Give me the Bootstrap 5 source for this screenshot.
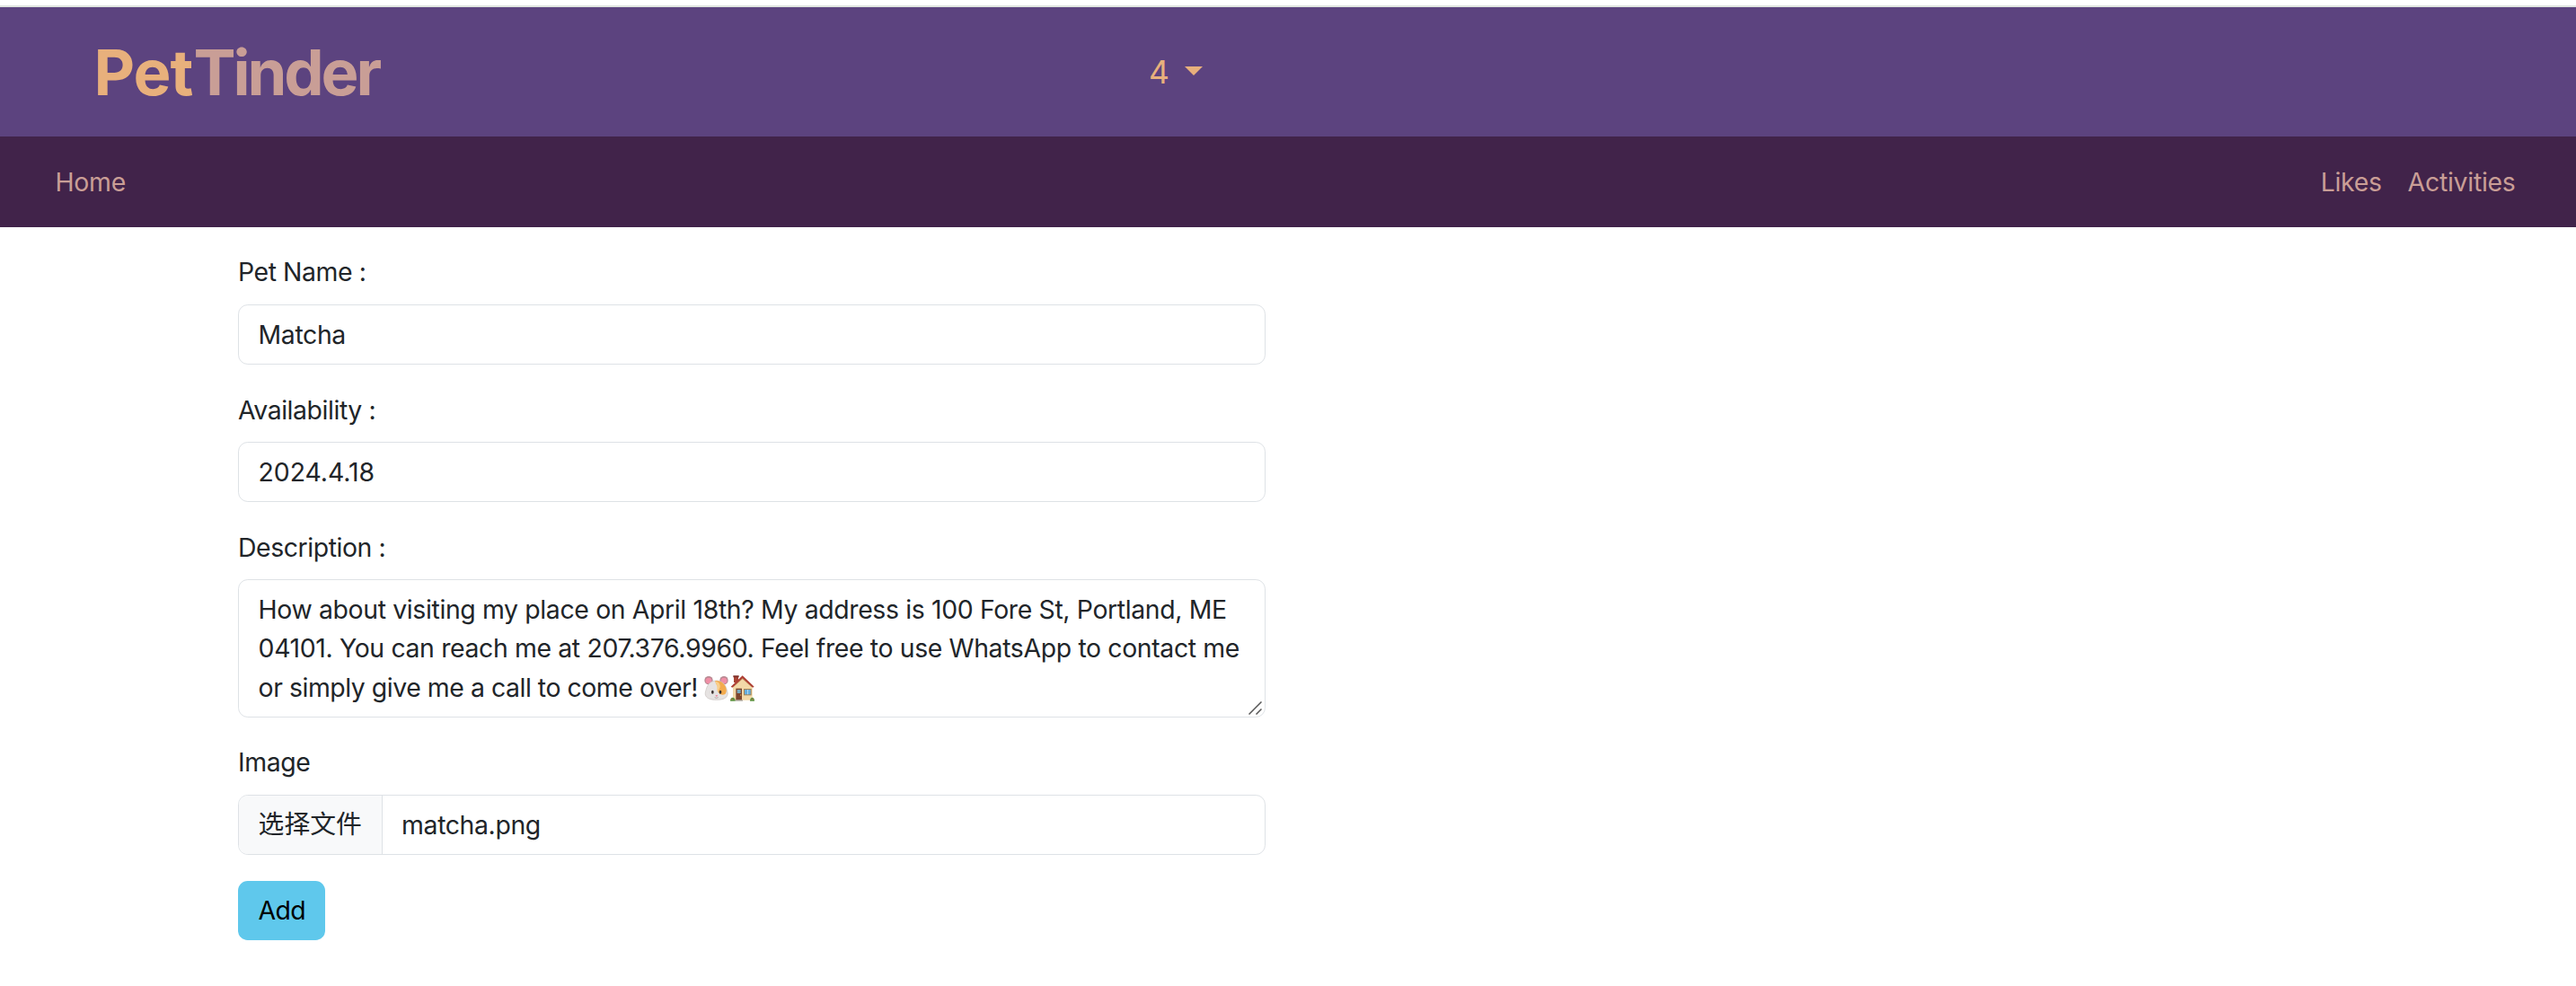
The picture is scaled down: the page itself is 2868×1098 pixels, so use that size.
<!DOCTYPE html>
<html lang="en">
<head>
<meta charset="utf-8">
<meta name="viewport" content="width=device-width, initial-scale=1">
<title>PetTinder</title>
<link href="https://cdn.jsdelivr.net/npm/bootstrap@5.3.0/dist/css/bootstrap.min.css" rel="stylesheet">
<script src="https://cdn.jsdelivr.net/npm/bootstrap@5.3.0/dist/js/bootstrap.bundle.min.js"></script>
<style>
html{font-size:28.8px}
body{font-family:Inter,"Noto Sans CJK SC",sans-serif;color:#212529;background:#fff;line-height:43.2px;font-size:28.4px}
.topline{height:8px;border-bottom:2px solid #dfe4df}
.brandbar{height:144px;background:#5c437f;padding-left:104.5px}
.brandname{width:1174.5px;padding-top:38px;font-size:70.5px;font-weight:700;color:#c99e96;line-height:1;letter-spacing:-3.1px}
.pet-part{color:#e8b07c;margin-right:1px;letter-spacing:-1px}
.account{padding-top:45.5px;font-size:35.5px;line-height:53px;color:#e8b07c;text-decoration:none}
.caret-down{border:10px solid transparent;border-top-color:currentColor;border-bottom:0;margin:20.5px 0 0 17px}
.subnav{height:101px;background:#41234a;padding:0 53px 0 47px}
.subnav .nav-link{color:#c99e96;font-size:28.4px;padding:14.4px;line-height:43.2px;letter-spacing:-.25px}
.pet-form{margin-left:265px;width:1144px;padding-top:28.4px}
.pet-form .form-label{display:block;margin-bottom:14.4px;font-size:28.4px;letter-spacing:-.42px}
.pet-form .form-control{font-size:28.4px;line-height:43.2px;height:66.8px;letter-spacing:-.38px;padding:10.8px 21.6px;color:#212529;background-color:#fff;border:1px solid #dee2e6;border-radius:10.8px}
.pet-form .form-control.digits{letter-spacing:-.05px}
.pet-form .field{margin-bottom:28.8px}
.pet-form .about{height:153.2px;white-space:nowrap;letter-spacing:-.36px;overflow:hidden}
.pet-form .about span{letter-spacing:-.45px}
.grip{right:3px;bottom:2px}
.emo{width:27px;height:29px;vertical-align:-5px}
.emo + .emo{margin-left:2px}
.pick{width:159.5px;background:#f8f9fa;border-right:1px solid #dee2e6;padding-left:21.6px;font-size:28.8px;letter-spacing:0;line-height:42.5px;padding-top:11px}
.pick-name{padding:10.8px 21.6px}
.btn-add{background:#5fc8ec;color:#000;font-size:28.4px;line-height:43.2px;padding:11.5px 22.6px;height:66.6px;width:97px;letter-spacing:-.6px;border:0;border-radius:10.8px}
</style>
</head>
<body>
<div class="topline"></div>
<header class="brandbar d-flex align-items-start">
  <div class="brandname"><span class="pet-part">Pet</span><span>Tinder</span></div>
  <a href="#" class="account d-flex align-items-start"><span>4</span><span class="caret-down"></span></a>
</header>
<nav class="subnav d-flex justify-content-between align-items-center">
  <ul class="nav"><li class="nav-item"><a class="nav-link" href="#">Home</a></li></ul>
  <ul class="nav">
    <li class="nav-item"><a class="nav-link" href="#">Likes</a></li>
    <li class="nav-item"><a class="nav-link" href="#">Activities</a></li>
  </ul>
</nav>
<form class="pet-form">
  <div class="field">
    <label class="form-label" for="pet">Pet Name :</label>
    <input id="pet" class="form-control" value="Matcha">
  </div>
  <div class="field">
    <label class="form-label" for="avail">Availability :</label>
    <input id="avail" class="form-control digits" value="2024.4.18">
  </div>
  <div class="field">
    <label class="form-label">Description :</label>
    <div class="form-control about position-relative" contenteditable="true" role="textbox" spellcheck="false">How about visiting my place on April 18th? My address is 100 Fore St, Portland, ME<br>04101. You can reach me at 207.376.9960. Feel free to use WhatsApp to contact me<br><span>or simply give me a call to come over! </span><svg class="emo" viewBox="45 33 81 87">
        <g fill="#b98a93"><circle cx="60" cy="50" r="14"/><circle cx="111" cy="50" r="14"/></g>
        <g fill="#f08fa6"><circle cx="60" cy="51" r="10"/><circle cx="111" cy="51" r="10"/></g>
        <path d="M86 51c-20 0-30 13-34 28-3 10-5 15-2 22 5 11 20 14 36 14s31-3 36-14c3-7 1-12-2-22-4-15-14-28-34-28z" fill="#e6e3e2" stroke="#c9c2c0" stroke-width="2"/>
        <path d="M82 51c17-2 30 7 36 24 2 8 2 14-2 20-8 6-18 3-23-4-5-6 2-13-2-20-3-6-9-9-9-20z" fill="#f3ab4d"/>
        <path d="M84 53c10 2 15 9 14 19-1 7-7 11-6 18-6-4-3-12-4-18-1-8-5-10-4-19z" fill="#f8cf8c"/>
        <ellipse cx="73" cy="89" rx="4" ry="6" fill="#38302e"/><ellipse cx="99" cy="89" rx="4" ry="6" fill="#38302e"/>
        <path d="M82 100h9l-4.500 5z" fill="#ed6f8b"/><path d="M80 107q6 4 12 0" stroke="#998b88" stroke-width="2" fill="none"/>
      </svg><svg class="emo" viewBox="132 33 81 87">
        <path d="M144 37h15v20h-15z" fill="#a94435"/><path d="M142 34h19v6h-19z" fill="#7f3028"/>
        <path d="M141 70l32-31 33 31v46h-65z" fill="#f2d9a8"/><path d="M141 70l32-31 33 31-2 3-31-27-31 27z" fill="#c79c69"/>
        <path d="M134 71l39-37 39 37-5 3-34-31-34 31z" fill="#ae4035"/>
        <path d="M151 77h20v39h-20z" fill="#7c452e"/><path d="M155 81h12v12h-12z" fill="#77a9bd"/><circle cx="167" cy="99" r="2" fill="#e7bd5e"/>
        <path d="M177 78h26v22h-26z" fill="#a28355"/><path d="M180 81h20v16h-20z" fill="#64addd"/><path d="M189 81h2v16h-2z" fill="#d9eef8"/>
        <path d="M148 115h26v4h-26z" fill="#a8a29a"/><path d="M132 119q0-12 9-12 8 2 8 12zM198 119q0-10 7-12 8 0 8 12z" fill="#5d9440"/><circle cx="138" cy="113" r="2" fill="#d9564c"/><circle cx="207" cy="113" r="2" fill="#d9564c"/>
      </svg>
      <svg class="grip position-absolute" width="15" height="15" viewBox="0 0 15 15" stroke="#555" stroke-width="1.500"><path d="M.5 14.500l14-14M8.500 14.500l6-6"/></svg>
    </div>
  </div>
  <div class="field">
    <label class="form-label">Image</label>
    <div class="form-control d-flex p-0 overflow-hidden">
      <div class="pick">选择文件</div>
      <div class="pick-name">matcha.png</div>
    </div>
  </div>
  <button type="button" class="btn btn-add">Add</button>
</form>
</body>
</html>
